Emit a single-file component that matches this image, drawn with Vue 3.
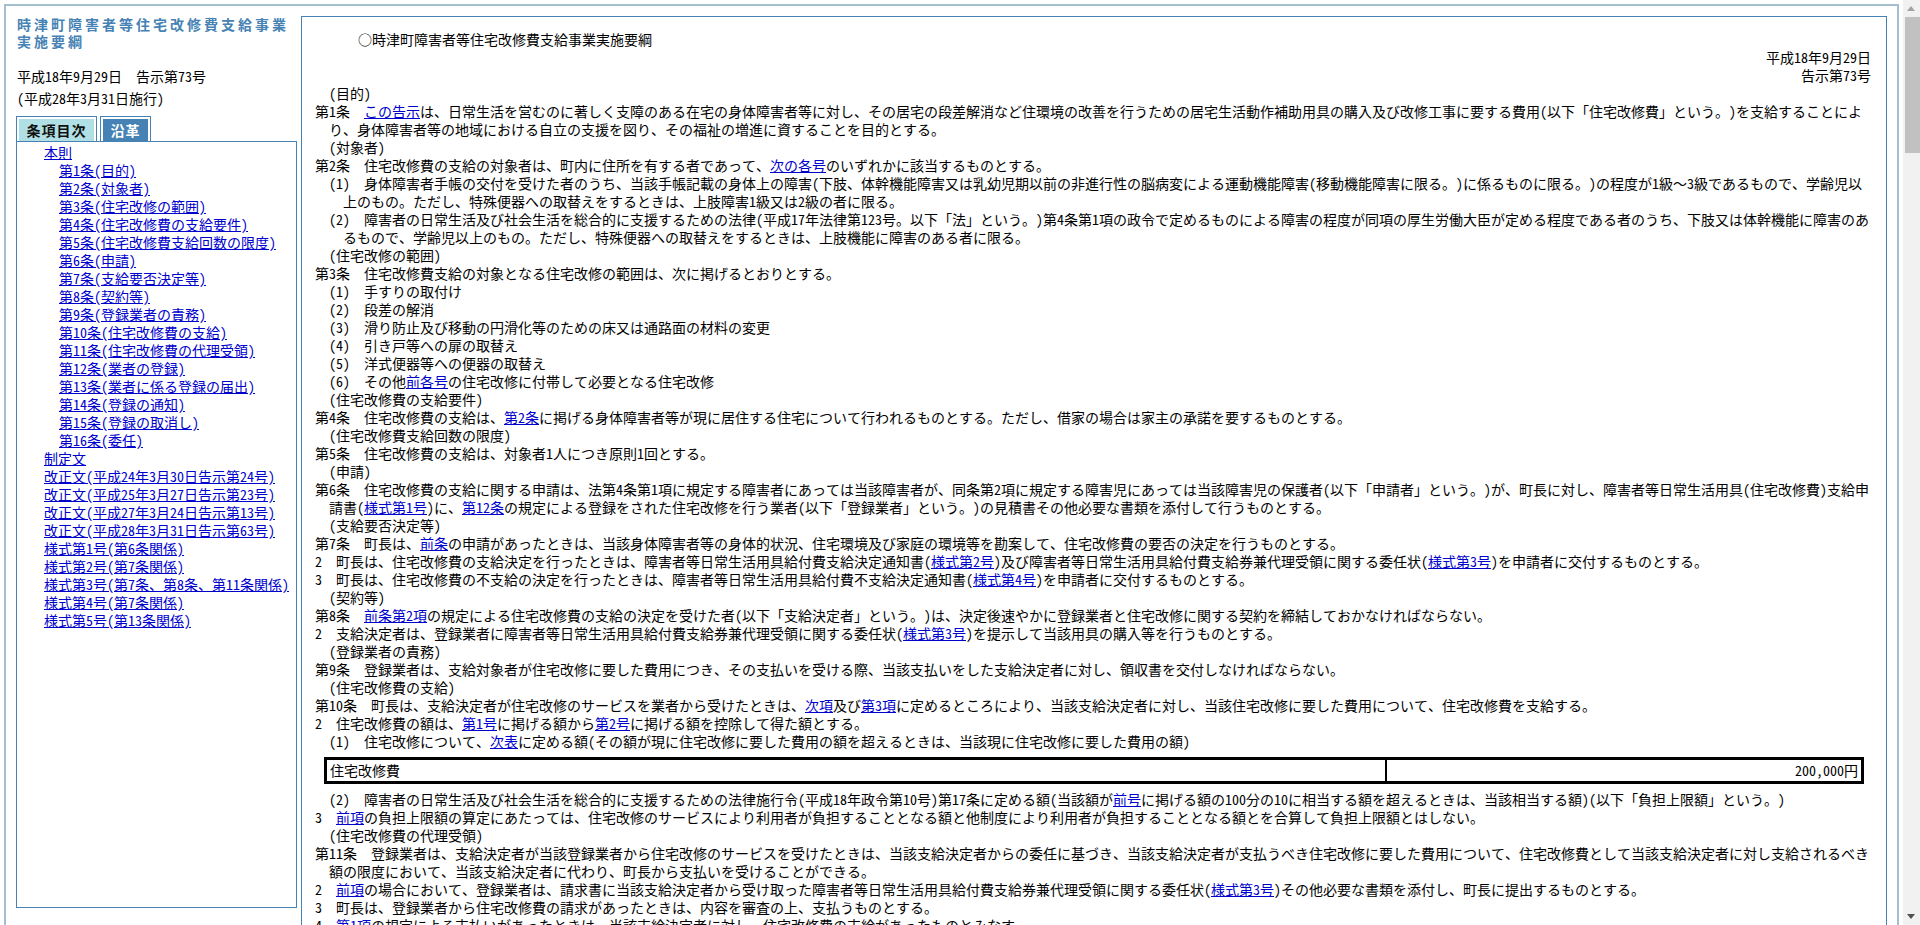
<script setup>
const toc = [
  ['本則', 0], ['第1条(目的)', 1], ['第2条(対象者)', 1], ['第3条(住宅改修の範囲)', 1], ['第4条(住宅改修費の支給要件)', 1],
  ['第5条(住宅改修費支給回数の限度)', 1], ['第6条(申請)', 1], ['第7条(支給要否決定等)', 1], ['第8条(契約等)', 1],
  ['第9条(登録業者の責務)', 1], ['第10条(住宅改修費の支給)', 1], ['第11条(住宅改修費の代理受領)', 1], ['第12条(業者の登録)', 1],
  ['第13条(業者に係る登録の届出)', 1], ['第14条(登録の通知)', 1], ['第15条(登録の取消し)', 1], ['第16条(委任)', 1],
  ['制定文', 0], ['改正文(平成24年3月30日告示第24号)', 0], ['改正文(平成25年3月27日告示第23号)', 0],
  ['改正文(平成27年3月24日告示第13号)', 0], ['改正文(平成28年3月31日告示第63号)', 0],
  ['様式第1号(第6条関係)', 0], ['様式第2号(第7条関係)', 0], ['様式第3号(第7条、第8条、第11条関係)', 0],
  ['様式第4号(第7条関係)', 0], ['様式第5号(第13条関係)', 0],
]

const source = [
  ['h', '(目的)'],
  ['a', '第1条　[この告示]は、日常生活を営むのに著しく支障のある在宅の身体障害者等に対し、その居宅の段差解消など住環境の改善を行うための居宅生活動作補助用具の購入及び改修工事に要する費用(以下「住宅改修費」という。)を支給することによ'],
  ['c', 'り、身体障害者等の地域における自立の支援を図り、その福祉の増進に資することを目的とする。'],
  ['h', '(対象者)'],
  ['a', '第2条　住宅改修費の支給の対象者は、町内に住所を有する者であって、[次の各号]のいずれかに該当するものとする。'],
  ['i', '(1)　身体障害者手帳の交付を受けた者のうち、当該手帳記載の身体上の障害(下肢、体幹機能障害又は乳幼児期以前の非進行性の脳病変による運動機能障害(移動機能障害に限る。)に係るものに限る。)の程度が1級～3級であるもので、学齢児以'],
  ['j', '上のもの。ただし、特殊便器への取替えをするときは、上肢障害1級又は2級の者に限る。'],
  ['i', '(2)　障害者の日常生活及び社会生活を総合的に支援するための法律(平成17年法律第123号。以下「法」という。)第4条第1項の政令で定めるものによる障害の程度が同項の厚生労働大臣が定める程度である者のうち、下肢又は体幹機能に障害のあ'],
  ['j', 'るもので、学齢児以上のもの。ただし、特殊便器への取替えをするときは、上肢機能に障害のある者に限る。'],
  ['h', '(住宅改修の範囲)'],
  ['a', '第3条　住宅改修費支給の対象となる住宅改修の範囲は、次に掲げるとおりとする。'],
  ['i', '(1)　手すりの取付け'],
  ['i', '(2)　段差の解消'],
  ['i', '(3)　滑り防止及び移動の円滑化等のための床又は通路面の材料の変更'],
  ['i', '(4)　引き戸等への扉の取替え'],
  ['i', '(5)　洋式便器等への便器の取替え'],
  ['i', '(6)　その他[前各号]の住宅改修に付帯して必要となる住宅改修'],
  ['h', '(住宅改修費の支給要件)'],
  ['a', '第4条　住宅改修費の支給は、[第2条]に掲げる身体障害者等が現に居住する住宅について行われるものとする。ただし、借家の場合は家主の承諾を要するものとする。'],
  ['h', '(住宅改修費支給回数の限度)'],
  ['a', '第5条　住宅改修費の支給は、対象者1人につき原則1回とする。'],
  ['h', '(申請)'],
  ['a', '第6条　住宅改修費の支給に関する申請は、法第4条第1項に規定する障害者にあっては当該障害者が、同条第2項に規定する障害児にあっては当該障害児の保護者(以下「申請者」という。)が、町長に対し、障害者等日常生活用具(住宅改修費)支給申'],
  ['c', '請書([様式第1号])に、[第12条]の規定による登録をされた住宅改修を行う業者(以下「登録業者」という。)の見積書その他必要な書類を添付して行うものとする。'],
  ['h', '(支給要否決定等)'],
  ['a', '第7条　町長は、[前条]の申請があったときは、当該身体障害者等の身体的状況、住宅環境及び家庭の環境等を勘案して、住宅改修費の要否の決定を行うものとする。'],
  ['a', '2　町長は、住宅改修費の支給決定を行ったときは、障害者等日常生活用具給付費支給決定通知書([様式第2号])及び障害者等日常生活用具給付費支給券兼代理受領に関する委任状([様式第3号])を申請者に交付するものとする。'],
  ['a', '3　町長は、住宅改修費の不支給の決定を行ったときは、障害者等日常生活用具給付費不支給決定通知書([様式第4号])を申請者に交付するものとする。'],
  ['h', '(契約等)'],
  ['a', '第8条　[前条第2項]の規定による住宅改修費の支給の決定を受けた者(以下「支給決定者」という。)は、決定後速やかに登録業者と住宅改修に関する契約を締結しておかなければならない。'],
  ['a', '2　支給決定者は、登録業者に障害者等日常生活用具給付費支給券兼代理受領に関する委任状([様式第3号])を提示して当該用具の購入等を行うものとする。'],
  ['h', '(登録業者の責務)'],
  ['a', '第9条　登録業者は、支給対象者が住宅改修に要した費用につき、その支払いを受ける際、当該支払いをした支給決定者に対し、領収書を交付しなければならない。'],
  ['h', '(住宅改修費の支給)'],
  ['a', '第10条　町長は、支給決定者が住宅改修のサービスを業者から受けたときは、[次項]及び[第3項]に定めるところにより、当該支給決定者に対し、当該住宅改修に要した費用について、住宅改修費を支給する。'],
  ['a', '2　住宅改修費の額は、[第1号]に掲げる額から[第2号]に掲げる額を控除して得た額とする。'],
  ['i', '(1)　住宅改修について、[次表]に定める額(その額が現に住宅改修に要した費用の額を超えるときは、当該現に住宅改修に要した費用の額)'],
  ['t', ''],
  ['i', '(2)　障害者の日常生活及び社会生活を総合的に支援するための法律施行令(平成18年政令第10号)第17条に定める額(当該額が[前号]に掲げる額の100分の10に相当する額を超えるときは、当該相当する額)(以下「負担上限額」という。)'],
  ['a', '3　[前項]の負担上限額の算定にあたっては、住宅改修のサービスにより利用者が負担することとなる額と他制度により利用者が負担することとなる額とを合算して負担上限額とはしない。'],
  ['h', '(住宅改修費の代理受領)'],
  ['a', '第11条　登録業者は、支給決定者が当該登録業者から住宅改修のサービスを受けたときは、当該支給決定者からの委任に基づき、当該支給決定者が支払うべき住宅改修に要した費用について、住宅改修費として当該支給決定者に対し支給されるべき'],
  ['c', '額の限度において、当該支給決定者に代わり、町長から支払いを受けることができる。'],
  ['a', '2　[前項]の場合において、登録業者は、請求書に当該支給決定者から受け取った障害者等日常生活用具給付費支給券兼代理受領に関する委任状([様式第3号])その他必要な書類を添付し、町長に提出するものとする。'],
  ['a', '3　町長は、登録業者から住宅改修費の請求があったときは、内容を審査の上、支払うものとする。'],
  ['a', '4　[第1項]の規定による支払いがあったときは、当該支給決定者に対し、住宅改修費の支給があったものとみなす。'],
]

const lines = source.map(([kind, text]) => ({
  kind,
  parts: text.split(/(\[[^\]]+\]|[　～])/).filter(Boolean).map((s) => {
    if (s.startsWith('[')) return { type: 'link', text: s.slice(1, -1) }
    if (s === '　' || s === '～') return { type: 'wide', text: s }
    return { type: 'text', text: s }
  }),
}))
</script>

<template>
  <div class="root">
    <div class="page">
      <div class="frame">
        <aside class="side">
          <h1 class="doc-title">時津町障害者等住宅改修費支給事業実施要綱</h1>
          <div class="meta">
            <div>平成18年9月29日<span class="wide">　</span>告示第73号</div>
            <div>(平成28年3月31日施行)</div>
          </div>
          <div class="tabs">
            <div class="tab"><span class="tab-fill active">条項目次</span></div>
            <div class="tab"><span class="tab-fill other">沿革</span></div>
          </div>
          <nav class="toc">
            <div v-for="item in toc" :key="item[0]" class="toc-row" :class="{ sub: item[1] }">
              <a href="#">{{ item[0] }}</a>
            </div>
          </nav>
        </aside>
        <main class="main">
          <div class="law-title">○時津町障害者等住宅改修費支給事業実施要綱</div>
          <div class="date">平成18年9月29日</div>
          <div class="date">告示第73号</div>
          <template v-for="(line, i) in lines" :key="i">
            <table v-if="line.kind === 't'" class="fee">
              <tbody>
                <tr>
                  <td class="fee-name">住宅改修費</td>
                  <td class="fee-value">200,000円</td>
                </tr>
              </tbody>
            </table>
            <div v-else class="line" :class="line.kind">
              <template v-for="(part, j) in line.parts" :key="j">
                <a v-if="part.type === 'link'" href="#">{{ part.text }}</a>
                <span v-else-if="part.type === 'wide'" class="wide">{{ part.text }}</span>
                <template v-else>{{ part.text }}</template>
              </template>
            </div>
          </template>
        </main>
      </div>
    </div>
    <div class="scrollbar">
      <svg class="arrow" width="17" height="17" viewBox="0 0 17 17"><path d="M8 6 L12 11 L4 11 Z" fill="#a3a3a3" /></svg>
      <div class="thumb"></div>
      <div class="track"></div>
      <svg class="arrow" width="17" height="17" viewBox="0 0 17 17"><path d="M4 6 L12 6 L8 11 Z" fill="#505050" /></svg>
    </div>
  </div>
</template>

<style>
html, body {
  margin: 0;
  background: #fff;
  overflow: hidden;
}
</style>

<style scoped>
.root {
  display: flex;
  height: 925px;
  overflow: hidden;
  background: #fff;
  color: #000;
  font-family: "Noto Sans CJK JP", "Liberation Sans", sans-serif;
  font-size: 14px;
  line-height: 18px;
  font-feature-settings: "hwid" 1;
  font-kerning: none;
  text-spacing-trim: space-all;
}
.wide {
  font-feature-settings: normal;
}
a {
  color: #0000cc;
  text-decoration: underline;
}
.page {
  flex: 1;
  min-width: 0;
  padding: 4px 4px 0 4px;
}
.frame {
  display: flex;
  gap: 4px;
  height: 960px;
  box-sizing: border-box;
  padding: 10px;
  border: 2px solid #a5bfcf;
}
.side {
  flex: none;
  width: 281px;
  display: flex;
  flex-direction: column;
  height: 892px;
}
.doc-title {
  margin: 0;
  padding-left: 1px;
  color: #4682b4;
  font-size: 14px;
  font-weight: 700;
  line-height: 17px;
  letter-spacing: 3px;
}
.meta {
  margin-top: 15px;
  padding-left: 1px;
  line-height: 22px;
}
.tabs {
  display: flex;
  gap: 3px;
  margin-top: 7px;
  height: 25px;
}
.tab {
  box-sizing: border-box;
  height: 25px;
  padding: 2px 2px 0;
  border: 1px solid #4682b4;
  border-bottom: 0;
}
.tab-fill {
  display: block;
  height: 22px;
  padding: 0 7.5px;
  font-weight: 700;
  line-height: 22px;
  letter-spacing: 1px;
}
.active {
  background: #b0e0e6;
  color: #111;
}
.other {
  background: #4682b4;
  color: #fff;
}
.toc {
  flex: 1;
  padding: 1px 0 0 27px;
  border: 1px solid #4682b4;
}
.toc-row {
  white-space: nowrap;
}
.sub {
  padding-left: 15px;
}
.main {
  flex: 1;
  min-width: 0;
  box-sizing: border-box;
  padding: 13px 13px 0;
  border: 1px solid #4682b4;
  white-space: nowrap;
}
.law-title {
  padding-left: 43px;
}
.date {
  text-align: right;
  padding-right: 2px;
}
.h {
  padding-left: 14px;
}
.c {
  padding-left: 14px;
}
.i {
  padding-left: 14px;
}
.j {
  padding-left: 28px;
}
.fee {
  width: 1540px;
  margin: 7px 0 6px 9px;
  border-collapse: separate;
  border-spacing: 0;
  border: 3px solid #000;
}
.fee td {
  padding: 1px 3px 2px;
  line-height: 18px;
}
.fee-name {
  width: 1052px;
  border-right: 2px solid #000;
}
.fee-value {
  text-align: right;
}
.scrollbar {
  flex: none;
  width: 17px;
  display: flex;
  flex-direction: column;
  background: #f1f1f1;
}
.arrow {
  flex: none;
  display: block;
}
.thumb {
  flex: none;
  height: 136px;
  margin-left: 2px;
  background: #c1c1c1;
}
.track {
  flex: 1;
}
</style>
